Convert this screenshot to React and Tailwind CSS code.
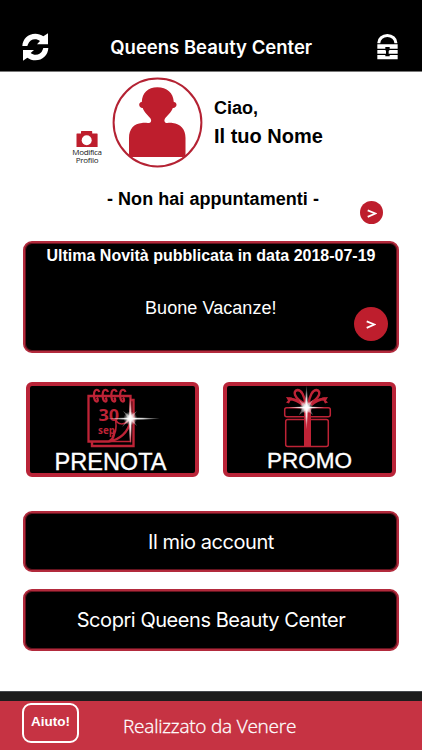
import React from "react";

const ARIAL = "font-['Liberation_Sans',Arial,sans-serif]";
const INTER = "font-['Inter',sans-serif]";
const PANEL = "rounded-[9px] border-2 border-[#b22a3c] bg-black shadow-[inset_0_0_0_1px_#64131e]";

function RefreshIcon() {
  return (
    <svg viewBox="65 38 81 84" className="h-7 w-[27px]" fill="#fff">
      <path d="M66 77C67 56 83 40 105 40c9 0 17 3 24 8l14-9v33h-33l9-10c-12-10-31-6-36 10l-2 5z" />
      <path d="M144 83c-1 21-17 37-39 37-9 0-17-3-24-8l-13 9V89h33l-10 9c12 10 31 6 36-10l2-5z" />
    </svg>
  );
}

function LockIcon() {
  return (
    <svg viewBox="498 42 63 78" className="h-[26px] w-[21px]">
      <path d="M499 70v-2a30 26 0 0 1 60 0v2h-9v-1a21 18 0 0 0-42 0v1z" fill="#fff" />
      <path d="M499 73h61v13h-61zM499 90h61v11h-61zM499 105h61v13h-61z" fill="#fff" />
      <path d="M523 81h13v9l-3 3v9h3v7h-13v-7h2v-9l-2-3z" fill="#000" />
    </svg>
  );
}

function Avatar() {
  return (
    <svg viewBox="112 77 91 91" className="h-[91px] w-[91px]">
      <circle cx="157.5" cy="122.5" r="43.9" fill="#fff" stroke="#b42233" strokeWidth="2" />
      <path
        fill="#be1e2d"
        d="M157.300 87.300C148 87.300 142.200 93 141.800 102c-1.800 0-2.800 1.400-2.600 3.100.3 1.900 1.600 3 3.500 2.800 1.600 5 6 7.600 7.800 10.600 1 1.800.8 3-.2 3.900-2 1.400-4.800 0-8.300.6C134 123.500 129 129 129 138v16q0 3 3 3h50.500q3 0 3-3v-16c0-9-5-14-13-15-3.500-.6-5.500.8-7.300-.6-1-1-1.100-2.100-.2-3.900 1.800-3 6.200-5.600 7.800-10.600 1.900.2 3.400-.9 3.700-2.800.2-1.700-.8-3.100-2.700-3.100-.4-9-6.900-14.700-16.500-14.700z"
      />
    </svg>
  );
}

function CameraIcon() {
  return (
    <svg viewBox="0 0 22 18" className="h-[18px] w-[22px] shrink-0">
      <path fill="#be1e2d" d="M1 3.500h4V1.600Q5 1 5.600 1h10q.6 0 .6.600v1.900H21q.6 0 .6.600v13H.5V4q0-.5.5-.5z" />
      <circle cx="10.700" cy="10.200" r="5" fill="#fff" />
    </svg>
  );
}

function CalendarIcon() {
  return (
    <svg viewBox="30 386 165 66" className="block h-[66px] w-[165px] overflow-visible">
      <defs>
        <radialGradient id="glow">
          <stop offset="0" stopColor="#fff" />
          <stop offset=".35" stopColor="#fff" stopOpacity=".85" />
          <stop offset="1" stopColor="#fff" stopOpacity="0" />
        </radialGradient>
      </defs>
      <g fill="none" stroke="#be2336" strokeWidth="2">
        <path d="M92 442v4h41.500v-46h-3" strokeWidth="2.400" />
        <path d="M109 441.500H88.500V396h42v25c-2 11-11 19-22 20.500 5-2 6-6 5.500-11" strokeWidth="2.300" />
        <path d="M130.500 421v20.500H109M112 437c4-3 5-8 3.500-18 2 6 9 7 14 0" strokeWidth="1.500" />
        {[96.3, 105, 113.7, 122.5].map((x) => (
          <path key={x} d={`M${x + 3} 392c-1-3-4-3-5 0-1 4 0 9 2 9.500s2-2 .5-4`} strokeWidth="2.200" />
        ))}
      </g>
      <text x="98.500" y="421.400" fontSize="16.500" fontWeight="700" fill="#be2336" fontFamily="Open Sans, sans-serif" textLength="20.500" lengthAdjust="spacingAndGlyphs">30</text>
      <text x="98" y="433.500" fontSize="10" fontWeight="700" fill="#be2336" fontFamily="Open Sans, sans-serif" textLength="17" lengthAdjust="spacingAndGlyphs">sep</text>
      <ellipse cx="133" cy="418.600" rx="27" ry="1.400" fill="url(#glow)" />
      <ellipse cx="130.300" cy="421" rx="1.700" ry="24" fill="url(#glow)" />
      <path d="M123 411l7 5 7-5-5 7 5 8-7-6-8 7 6-9z" fill="#fff" opacity=".4" />
      <circle cx="130.300" cy="418.400" r="7" fill="url(#glow)" />
    </svg>
  );
}

function GiftIcon() {
  return (
    <svg viewBox="227 386 165 66" className="block h-[66px] w-[165px] overflow-visible">
      <defs>
        <radialGradient id="shine">
          <stop offset="0" stopColor="#fff" />
          <stop offset=".4" stopColor="#fff" stopOpacity=".85" />
          <stop offset="1" stopColor="#fff" stopOpacity="0" />
        </radialGradient>
      </defs>
      <g fill="none" stroke="#be2336" strokeWidth="1.500">
        <rect x="284.700" y="407.700" width="45.600" height="9" rx="2" />
        <rect x="285.700" y="419.500" width="42.600" height="27" rx="2" />
      </g>
      <path fill="#be2336" d="M304 408h7v39h-7z" />
      <g fill="none" stroke="#be2336" strokeWidth="2.500">
        <path d="M305.500 404c-1-8-4-14-8-14-5 1-4 8 8 14" />
        <path d="M308.500 404c1-8 4-14 8-14 5 1 4 8-8 14" />
        <path d="M303 405c-5-5-9-6-14-6M311 405c5-5 9-6 14-6" strokeWidth="2.800" />
      </g>
      <path fill="#be2336" d="M286 397l6 .500-3 6-3-1 2-2zM328 397l-6 .500 3 6 3-1-2-2z" />
      <ellipse cx="306.300" cy="407.500" rx="18" ry="1.300" fill="url(#shine)" />
      <ellipse cx="306.500" cy="407.500" rx="1.600" ry="22" fill="url(#shine)" />
      <path d="M299 400l7 5 7-5-4 7 4 8-7-5-7 5 4-8z" fill="#fff" opacity=".35" />
      <circle cx="306.300" cy="407.300" r="6.500" fill="url(#shine)" />
    </svg>
  );
}

function Chevron() {
  return (
    <svg viewBox="0 0 10 10" className="h-2.5 w-2.5" fill="none" stroke="#fff" strokeWidth="1.800">
      <path d="M.7 2.400L8.400 5.500.7 8.800" />
    </svg>
  );
}

function Tile({ icon, label, labelClass }) {
  return (
    <button className="flex h-[95px] w-[173px] flex-col items-center rounded-md border-4 border-[#b92438] bg-black">
      {icon}
      <span className={`${ARIAL} ${labelClass} whitespace-nowrap text-white [-webkit-text-stroke:0.35px_white]`}>{label}</span>
    </button>
  );
}

export default function App() {
  return (
    <div className={`flex h-[750px] w-[422px] flex-col overflow-hidden bg-white ${ARIAL}`}>
      <header className="flex h-[72px] shrink-0 items-start justify-between border-b border-[#777] bg-black pr-[24px] pl-[21.500px] text-white">
        <div className="pt-[33px]"><RefreshIcon /></div>
        <h1 className={`${INTER} pt-[34px] pr-[3px] text-[18.500px] leading-[27px] font-semibold whitespace-nowrap`}>Queens Beauty Center</h1>
        <div className="pt-[34px]"><LockIcon /></div>
      </header>

      <main className="flex h-[619px] shrink-0 flex-col">
        <section className="flex h-[96px] pt-[5px] pl-[72px] text-black">
          <div className="flex w-[30px] flex-col items-center pt-[53px]">
            <CameraIcon />
            <p className="text-center font-['Open_Sans',sans-serif] text-[8px] leading-[8px] tracking-[-0.3px] whitespace-nowrap text-[#222]">Modifica<br />Profilo</p>
          </div>
          <div className="pl-[10px]"><Avatar /></div>
          <div className="pt-[18px] pl-[11px] font-bold whitespace-nowrap">
            <p className="text-[18px] leading-[27px]">Ciao,</p>
            <p className="text-[20px] leading-[28px]">Il tuo Nome</p>
          </div>
        </section>

        <section className="flex h-[73px] pl-[107px] text-black">
          <p className="w-[253px] pt-[20px] text-[18px] leading-[22px] font-bold tracking-[0.04px] whitespace-nowrap">- Non hai appuntamenti -</p>
          <button className="mt-[33px] flex h-[23px] w-[23px] items-center justify-center rounded-full bg-[#be1e2d]"><Chevron /></button>
        </section>

        <section className={`mx-[23px] flex h-[112px] flex-col text-white ${PANEL}`}>
          <h2 className="pt-[4px] text-center text-[16px] leading-[18px] font-bold whitespace-nowrap">Ultima Novità pubblicata in data 2018-07-19</h2>
          <div className="flex grow">
            <p className="pt-[32px] pl-[120px] text-[18px] leading-[22px] tracking-[0.06px] whitespace-nowrap">Buone Vacanze!</p>
            <button className="mt-[42px] mr-[9px] ml-auto flex h-[34px] w-[34px] items-center justify-center rounded-full bg-[#be1e2d]"><Chevron /></button>
          </div>
        </section>

        <section className="flex justify-between pt-[29px] pr-[26px] pl-[26px]">
          <Tile icon={<CalendarIcon />} label="PRENOTA" labelClass="pr-[4px] text-[23.500px] leading-[20px]" />
          <Tile icon={<GiftIcon />} label="PROMO" labelClass="text-[22.500px] leading-[18px]" />
        </section>

        <nav className={`flex flex-col gap-[17px] px-[23px] pt-[34px] ${INTER} text-[20px] tracking-[-0.45px] text-white`}>
          <button className={`h-[61px] whitespace-nowrap ${PANEL}`}>Il mio account</button>
          <button className={`h-[62px] whitespace-nowrap ${PANEL}`}>Scopri Queens Beauty Center</button>
        </nav>
      </main>

      <div className="h-[10px] shrink-0 border-t border-[#46494e] bg-[#1d1d1d]" />
      <footer className="flex h-[49px] shrink-0 bg-[#c63343] pl-[22px] text-white">
        <button className="mt-[1.500px] flex h-[40px] w-[57px] items-center justify-center rounded-[9px] border-2 border-white text-[13.500px] font-bold">Aiuto!</button>
        <p className="pt-[12px] pl-[44px] font-['Open_Sans',sans-serif] text-[19px] leading-[26px] font-light tracking-[-0.22px] whitespace-nowrap [-webkit-text-stroke:0.3px_white]">Realizzato da Venere</p>
      </footer>
    </div>
  );
}
